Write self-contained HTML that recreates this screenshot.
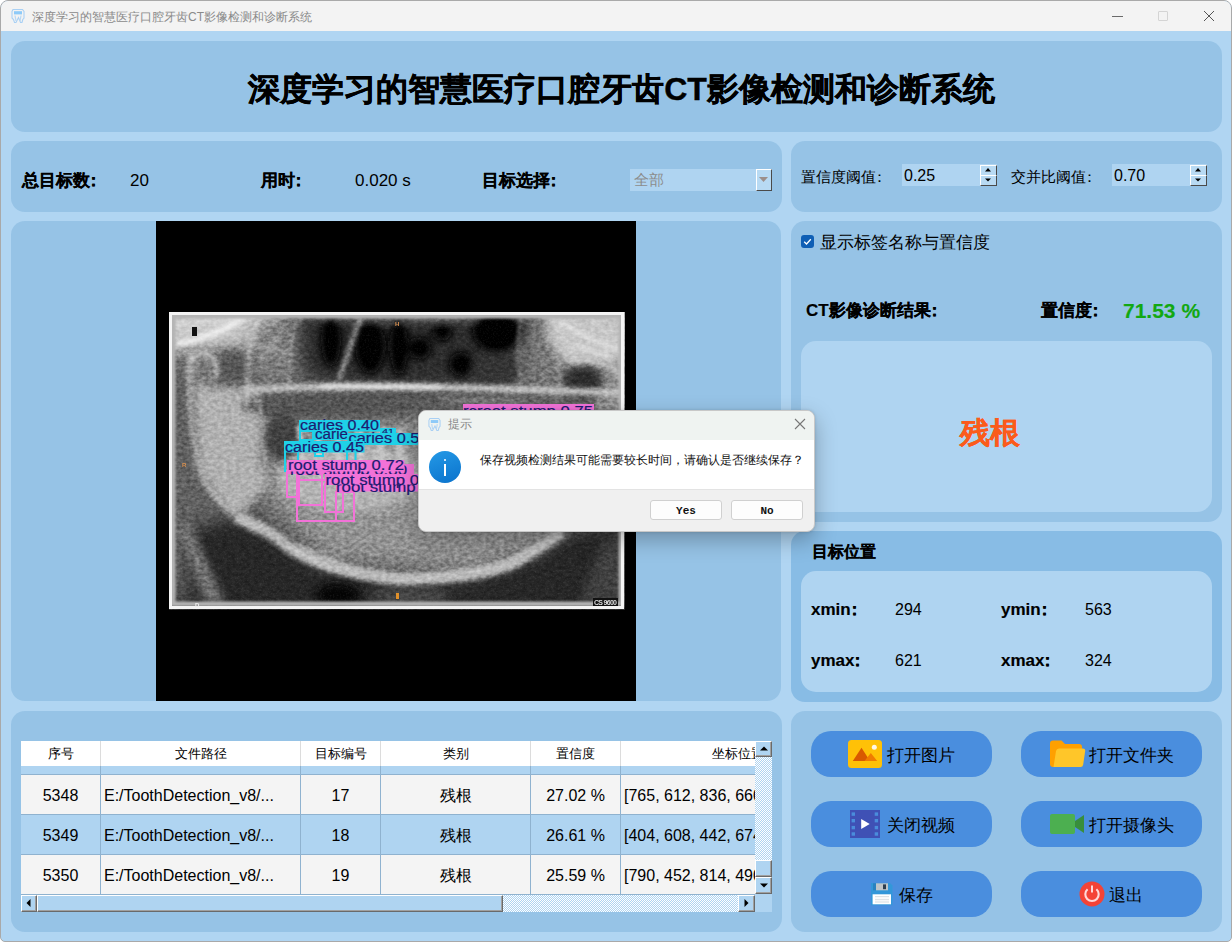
<!DOCTYPE html>
<html><head><meta charset="utf-8">
<style>
*{box-sizing:border-box;margin:0;padding:0}
html,body{width:1232px;height:942px;overflow:hidden;background:#fff}
body{font-family:"Liberation Sans",sans-serif;position:relative;color:#000}
.abs{position:absolute;white-space:nowrap}
#win{position:absolute;left:0;top:0;width:1232px;height:942px;background:#b0d5f2;border:1px solid #a9a9a9;border-radius:8px 8px 5px 5px;overflow:hidden}
#tb{position:absolute;left:0;top:0;width:1230px;height:30px;background:#f3f3f3}
.panel{position:absolute;background:#96c3e6;border-radius:14px}
.b{font-weight:bold;-webkit-text-stroke:0.15px currentColor}
.tt{-webkit-text-stroke:0.4px #000}
.c{margin-left:-0.3em}
.lbl{position:absolute;white-space:nowrap;line-height:1}
.spin{position:absolute;background:#afd4f1}
.sbtn{position:absolute;background:#b8daf3;border-right:1px solid #4a4a4a;border-bottom:1px solid #4a4a4a;border-top:1px solid #fff;border-left:1px solid #fff}
.btn{position:absolute;width:181px;height:46px;background:#4a8ede;border-radius:20px}
.btxt{position:absolute;font-size:17px;line-height:1;white-space:nowrap;margin-top:1px}

.th{position:absolute;top:6px;font-size:13px;line-height:1;text-align:center;white-space:nowrap;color:#000}
.td{position:absolute;font-size:16px;line-height:1;text-align:center;white-space:nowrap;color:#000}
.track{background:repeating-conic-gradient(#afd4f1 0 25%,#ffffff 0 50%) 0 0/2px 2px}
.sb3{position:absolute;background:#afd4f1;border-top:1px solid #fff;border-left:1px solid #fff;border-right:1px solid #6a6a6a;border-bottom:1px solid #6a6a6a;box-shadow:inset -1px -1px 0 #a0a0a0}
</style></head><body>
<div id="win">
<div id="tb">
  <svg class="abs" style="left:10px;top:7px" width="14" height="16" viewBox="0 0 14 16"><path d="M2 1.5H11.5L13 3.5V10L11.8 11.5L11 14.5H9.5L7.5 9.5L5 14.5H3.5L2.5 11.5L1 10V3.5Z" fill="none" stroke="#a9d0f4" stroke-width="1.1"/><rect x="3" y="3.2" width="8" height="3.2" fill="#8ecaf8"/><path d="M4 7.5L5 13M10 7.5L9 13" stroke="#b8d8f4" stroke-width="1.2"/></svg>
  <div class="lbl" style="left:31px;top:10px;font-size:12px;color:#8a8a8a">深度学习的智慧医疗口腔牙齿CT影像检测和诊断系统</div>
  <div class="abs" style="left:1111px;top:15px;width:11px;height:1px;background:#6a6a6a"></div>
  <div class="abs" style="left:1157px;top:10px;width:10px;height:10px;border:1px solid #d4d4d4;border-radius:1px"></div>
  <svg class="abs" style="left:1202px;top:9px" width="12" height="12" viewBox="0 0 12 12"><path d="M1 1L11 11M11 1L1 11" stroke="#555" stroke-width="1"/></svg>
</div>
</div>
<!-- panels -->
<div class="panel" style="left:11px;top:41px;width:1211px;height:91px"></div>
<div class="panel" style="left:11px;top:141px;width:771px;height:71px"></div>
<div class="panel" style="left:791px;top:141px;width:431px;height:71px"></div>
<div class="panel" style="left:11px;top:221px;width:770px;height:480px"></div>
<div class="panel" style="left:791px;top:221px;width:431px;height:301px"></div>
<div class="panel" style="left:791px;top:531px;width:431px;height:171px;background:#88bce5"></div>
<div class="panel" style="left:11px;top:711px;width:771px;height:221px"></div>
<div class="panel" style="left:791px;top:711px;width:431px;height:221px"></div>

<!-- title -->
<div class="lbl b tt" style="left:0;width:1232px;text-align:center;top:73px;font-size:32px;padding-left:11px">深度学习的智慧医疗口腔牙齿CT影像检测和诊断系统</div>

<!-- stats -->
<div class="lbl b" style="left:22px;top:172px;font-size:17px">总目标数<span class="c">：</span></div>
<div class="lbl" style="left:130px;top:172px;font-size:17px">20</div>
<div class="lbl b" style="left:261px;top:172px;font-size:17px">用时<span class="c">：</span></div>
<div class="lbl" style="left:355px;top:172px;font-size:17px">0.020 s</div>
<div class="lbl b" style="left:482px;top:172px;font-size:17px">目标选择<span class="c">：</span></div>
<div class="spin" style="left:630px;top:169px;width:142px;height:22px"></div>
<div class="lbl" style="left:634px;top:172px;font-size:15px;color:#8c8c8c">全部</div>
<div class="sbtn" style="left:756px;top:169px;width:16px;height:22px"></div>
<svg class="abs" style="left:759px;top:177px" width="10" height="6"><path d="M0 0H9L4.5 5Z" fill="#9c8f8a"/></svg>

<!-- thresholds -->
<div class="lbl" style="left:801px;top:169px;font-size:15px">置信度阈值<span class="c">：</span></div>
<div class="spin" style="left:902px;top:164px;width:95px;height:22px"></div>
<div class="lbl" style="left:904px;top:168px;font-size:16px">0.25</div>
<div class="sbtn" style="left:980px;top:165px;width:17px;height:11px"></div>
<div class="sbtn" style="left:980px;top:175px;width:17px;height:11px"></div>
<svg class="abs" style="left:985px;top:168px" width="7" height="4"><path d="M0 3.5H6L3 0Z" fill="#000"/></svg>
<svg class="abs" style="left:985px;top:178px" width="7" height="4"><path d="M0 0.5H6L3 3.5Z" fill="#000"/></svg>
<div class="lbl" style="left:1011px;top:169px;font-size:15px">交并比阈值<span class="c">：</span></div>
<div class="spin" style="left:1112px;top:164px;width:95px;height:22px"></div>
<div class="lbl" style="left:1114px;top:168px;font-size:16px">0.70</div>
<div class="sbtn" style="left:1190px;top:165px;width:17px;height:11px"></div>
<div class="sbtn" style="left:1190px;top:175px;width:17px;height:11px"></div>
<svg class="abs" style="left:1195px;top:168px" width="7" height="4"><path d="M0 3.5H6L3 0Z" fill="#000"/></svg>
<svg class="abs" style="left:1195px;top:178px" width="7" height="4"><path d="M0 0.5H6L3 3.5Z" fill="#000"/></svg>

<!-- image area -->
<div class="abs" style="left:156px;top:221px;width:480px;height:480px;background:#000"></div>
<!--XRAY--><svg class="abs" style="left:169px;top:312px" width="456" height="298" viewBox="169 312 456 298">
<defs>
<filter id="b1" x="-50%" y="-50%" width="200%" height="200%"><feGaussianBlur stdDeviation="1.2"/></filter><filter id="b2" x="-50%" y="-50%" width="200%" height="200%"><feGaussianBlur stdDeviation="2.2"/></filter>
<filter id="b4" x="-50%" y="-50%" width="200%" height="200%"><feGaussianBlur stdDeviation="4"/></filter>
<filter id="b10" x="-50%" y="-50%" width="200%" height="200%"><feGaussianBlur stdDeviation="9"/></filter>
<filter id="grain" x="0" y="0" width="100%" height="100%" color-interpolation-filters="sRGB"><feTurbulence type="fractalNoise" baseFrequency="0.6" numOctaves="2" seed="7"/><feColorMatrix values="0 0 0 0 1  0 0 0 0 1  0 0 0 0 1  1.6 0 0 0 -0.8"/></filter>
<filter id="tex" x="0" y="0" width="100%" height="100%" color-interpolation-filters="sRGB"><feTurbulence type="fractalNoise" baseFrequency="0.22 0.3" numOctaves="2" seed="11"/><feColorMatrix values="1.4 0 0 0 -0.2  1.4 0 0 0 -0.2  1.4 0 0 0 -0.2  0 0 0 0 1"/></filter><filter id="con" x="0" y="0" width="100%" height="100%" color-interpolation-filters="sRGB"><feComponentTransfer><feFuncR type="linear" slope="1.2" intercept="-0.09"/><feFuncG type="linear" slope="1.2" intercept="-0.09"/><feFuncB type="linear" slope="1.2" intercept="-0.09"/></feComponentTransfer></filter><clipPath id="xc"><rect x="169" y="312" width="456" height="298"/></clipPath>
</defs>
<g clip-path="url(#xc)">
<g filter="url(#con)">
<rect x="169" y="312" width="456" height="298" fill="#606060"/>
<g filter="url(#b10)">
 <path d="M150 295 L250 295 L300 300 L243 349 L181 352 L150 352Z" fill="#bcbcbc"/>
 <path d="M300 305 Q410 296 528 305 L528 350 Q522 384 470 386 Q400 390 330 384 Q298 378 296 350Z" fill="#383838"/>
 <path d="M540 300 L640 300 L640 365 L600 361 L565 362 L547 340Z" fill="#b0b0b0"/>
 <path d="M598 358 L640 358 L640 420 L598 420Z" fill="#8c8c8c"/>
 <ellipse cx="272" cy="352" rx="24" ry="36" fill="#7a7a7a"/>
 <ellipse cx="545" cy="355" rx="24" ry="40" fill="#767676"/>
 <path d="M169 350 L195 350 L200 474 L220 520 L169 522Z" fill="#646464"/>
 <path d="M262 420 L580 420 L570 540 L470 570 L330 560 L265 500Z" fill="#8c8c8c"/>
 <path d="M189 527 L236 517 L268 531 L292 549 L321 565 L400 583 L473 576 L510 564 L535 549 L562 532 L640 530 L640 640 L150 640 L150 603 L189 603Z" fill="#303030"/>
</g>
<g filter="url(#b4)">
 <ellipse cx="232" cy="366" rx="17" ry="16" fill="#5a5a5a"/>
 
 <ellipse cx="415" cy="313" rx="125" ry="7" fill="#7a7a7a"/>
 <ellipse cx="370" cy="346" rx="15" ry="28" fill="#080808"/>
 <ellipse cx="399" cy="346" rx="9" ry="30" fill="#080808"/>
 <ellipse cx="331" cy="340" rx="10" ry="27" fill="#0a0a0a"/>
 <circle cx="420" cy="348" r="11" fill="#101010"/>
 <circle cx="442" cy="331" r="10" fill="#0a0a0a"/>
 <circle cx="461" cy="364" r="12" fill="#0c0c0c"/>
 <ellipse cx="497" cy="330" rx="25" ry="22" fill="#080808"/>
 <ellipse cx="496" cy="370" rx="24" ry="16" fill="#3c3c3c"/>
 
 <path d="M547 312 L625 312 L619 361 L565 362 L547 340Z" fill="#b8b8b8"/>
 <ellipse cx="583" cy="381" rx="19" ry="17" fill="#383838"/>
 <path d="M192 385 L255 388 L261 418 L261 461 L268 486 L240 517 L228 512 L200 474Z" fill="#a6a6a6"/>
 <ellipse cx="282" cy="438" rx="20" ry="24" fill="#4a4a4a"/>
 <ellipse cx="330" cy="406" rx="90" ry="11" fill="#585858"/><ellipse cx="520" cy="408" rx="80" ry="10" fill="#666"/>
 <ellipse cx="350" cy="478" rx="72" ry="34" fill="#a8a8a8"/>
 <path d="M175 524 L190 524 L225 603 L205 603Z" fill="#727272"/>
 <ellipse cx="338" cy="595" rx="22" ry="12" fill="#121212"/>
 <ellipse cx="410" cy="596" rx="40" ry="10" fill="#4c4c4c"/>
 <path d="M606 533 L625 533 L625 603 L580 601Z" fill="#474747"/>
 <ellipse cx="202" cy="368" rx="15" ry="16" fill="#8c8c8c"/>
 <ellipse cx="204" cy="370" rx="8" ry="9" fill="#6e6e6e"/>
</g>
<g filter="url(#b2)" fill="none">
 <path d="M176 344 Q215 338 245 316" stroke="#dadada" stroke-width="6"/>
 <path d="M172 326 Q215 322 255 314" stroke="#c8c8c8" stroke-width="3"/>
 <path d="M262 314 Q245 340 248 392" stroke="#c4c4c4" stroke-width="2.5"/>
 <path d="M300 316 Q286 340 290 384" stroke="#a8a8a8" stroke-width="2"/>
 <path d="M362 312 L339 380" stroke="#9a9a9a" stroke-width="4"/>
 <path d="M521 318 Q516 350 522 392" stroke="#989898" stroke-width="2"/>
 <path d="M545 316 Q560 350 560 395" stroke="#a8a8a8" stroke-width="2"/>
 <path d="M560 322 Q590 340 620 350" stroke="#d8d8d8" stroke-width="3"/>
 <path d="M575 345 Q595 352 612 358" stroke="#cfcfcf" stroke-width="3"/>
 <path d="M570 362 Q600 356 622 376" stroke="#c8c8c8" stroke-width="2.5"/>
 <path d="M189 380 Q186 356 202 353 Q218 354 217 378" stroke="#c8c8c8" stroke-width="2.5"/>
 <path d="M243 390 Q300 386 400 387 Q500 388 622 393" stroke="#b4b4b4" stroke-width="7"/><path d="M320 386 Q380 385 440 387" stroke="#d8d8d8" stroke-width="5"/>
 <path d="M236 517 Q270 530 292 549 Q330 572 400 579 Q470 578 510 564 Q540 548 562 532" stroke="#b0b0b0" stroke-width="12"/>
 <path d="M212 474 Q216 500 236 517" stroke="#9a9a9a" stroke-width="4"/>
 <path d="M190 352 Q186 420 200 470 Q210 500 232 510" stroke="#b8b8b8" stroke-width="3"/>
 <path d="M258 392 Q262 440 268 486" stroke="#a0a0a0" stroke-width="2"/>
 <path d="M230 330 Q260 350 290 352" stroke="#b0b0b0" stroke-width="2"/>
 <path d="M262 360 Q275 340 285 330" stroke="#a8a8a8" stroke-width="2"/>
 <path d="M548 314 Q565 330 575 360" stroke="#c8c8c8" stroke-width="2"/>
 <path d="M590 315 Q605 335 620 340" stroke="#c0c0c0" stroke-width="2.5"/>
 <path d="M600 400 Q596 420 604 440" stroke="#b0b0b0" stroke-width="2"/>
 <path d="M440 398 Q470 402 520 400" stroke="#9a9a9a" stroke-width="2"/>
 <path d="M245 460 Q255 430 270 420" stroke="#9a9a9a" stroke-width="2"/>
 <path d="M300 425 L302 465M318 428 L320 470M338 430 L339 472M360 428 L361 470M380 430 L381 468M400 428 L401 466" stroke="#c0c0c0" stroke-width="5"/>
 <path d="M250 530 Q300 545 340 560" stroke="#9a9a9a" stroke-width="3"/>
 <path d="M420 545 Q470 550 520 540" stroke="#8a8a8a" stroke-width="3"/>
</g>
</g>
<rect x="169" y="312" width="456" height="298" filter="url(#tex)" style="mix-blend-mode:overlay" opacity="0.3"/><rect x="169" y="312" width="456" height="298" filter="url(#grain)" opacity="0.12"/>
<g filter="url(#b1)"><rect x="173" y="316" width="448" height="288" fill="none" stroke="#b4b4b4" stroke-width="5"/></g>
<rect x="170.5" y="313.5" width="452" height="294" fill="none" stroke="#f4f4f4" stroke-width="3"/>
<rect x="192" y="327" width="5" height="9" fill="#111"/><text x="395" y="326" font-size="6" font-weight="bold" fill="#d89050" font-family="Liberation Sans">H</text><text x="182" y="467" font-size="6" font-weight="bold" fill="#d89050" font-family="Liberation Sans">R</text><text x="195" y="607" font-size="6" font-weight="bold" fill="#eee" font-family="Liberation Sans">D</text><rect x="396" y="593" width="3" height="6" fill="#e0902a"/>
<rect x="593" y="598" width="25" height="8" fill="#111"/>
<text x="594" y="605" font-size="7" font-weight="bold" fill="#ddd" font-family="Liberation Sans" textLength="23">CS 9600</text>
</g>
</svg>
<!--/XRAY--><!--ANNOT--><div class="abs" style="left:156px;top:221px;width:480px;height:480px;overflow:hidden">
<svg class="abs" style="left:0;top:0" width="480" height="480" viewBox="156 221 480 480">
 <g fill="none" stroke-width="2">
  <path d="M285 452V472M298 452V460M347 445V460M355.5 445V460" stroke="#1fd1e8"/>
  <rect x="315" y="452" width="8" height="4" stroke="#1fd1e8"/>
  <rect x="300" y="431" width="13" height="9" stroke="#1fd1e8"/>
  <rect x="287" y="472" width="10" height="25" stroke="#f272d8"/>
  <rect x="299" y="474" width="23" height="31" stroke="#f272d8"/>
  <rect x="297" y="480" width="57" height="41" stroke="#f272d8"/>
  <rect x="325" y="484" width="18" height="28" stroke="#f272d8"/>
  <rect x="336" y="492" width="18" height="29" stroke="#f272d8"/>
 </g>
 <g font-family="Liberation Sans" font-size="14" fill="#1d1b70" stroke="#1d1b70" stroke-width="0.2">
  <rect x="299" y="420" width="81" height="11.5" fill="#1fd1e8" stroke="none"/>
  <rect x="380" y="428" width="16" height="5" fill="#1fd1e8" stroke="none"/>
  <text x="300" y="430" textLength="79" lengthAdjust="spacingAndGlyphs">caries 0.40</text>
  <text x="382" y="434" font-size="8" textLength="12" lengthAdjust="spacingAndGlyphs">41</text>
  <rect x="313" y="431" width="35" height="9" fill="#1fd1e8" stroke="none"/>
  <text x="315" y="438.7" textLength="33" lengthAdjust="spacingAndGlyphs">carie</text>
  <rect x="347.5" y="433" width="80" height="12" fill="#1fd1e8" stroke="none"/>
  <text x="348.5" y="443" textLength="80" lengthAdjust="spacingAndGlyphs">caries 0.51</text>
  <rect x="284" y="441" width="80.5" height="11.5" fill="#1fd1e8" stroke="none"/>
  <text x="285" y="451.5" textLength="79" lengthAdjust="spacingAndGlyphs">caries 0.45</text>
  <rect x="287" y="464" width="127" height="10" fill="#f272d8" stroke="none"/>
  <text x="290" y="474.5" textLength="117" lengthAdjust="spacingAndGlyphs">root stump 0.80</text>
  <rect x="287" y="460" width="117.5" height="11.5" fill="#f272d8" stroke="none"/>
  <text x="288" y="470" textLength="116" lengthAdjust="spacingAndGlyphs">root stump 0.72</text>
  <rect x="336" y="483.5" width="90" height="8" fill="#f272d8" stroke="none"/>
  <text x="336" y="491.5" textLength="117" lengthAdjust="spacingAndGlyphs">root stump 0.65</text>
  <rect x="325" y="474" width="100" height="10.5" fill="#f272d8" stroke="none"/>
  <text x="325.5" y="484.5" textLength="117" lengthAdjust="spacingAndGlyphs">root stump 0.70</text>
  <rect x="463" y="404" width="131" height="12" fill="#f272d8" stroke="none"/>
  <text x="463" y="416" textLength="130" lengthAdjust="spacingAndGlyphs">rcroot stump 0.75</text>
 </g>
</svg>
</div>
<!--/ANNOT-->

<!-- right info -->
<div class="abs" style="left:801px;top:235px;width:13px;height:13px;background:#0f5fb5;border-radius:3px"></div>
<svg class="abs" style="left:801px;top:235px" width="13" height="13"><path d="M3.2 6.8L5.5 9L9.8 4.3" fill="none" stroke="#fff" stroke-width="1.3"/></svg>
<div class="lbl" style="left:820px;top:234px;font-size:17px">显示标签名称与置信度</div>
<div class="lbl b" style="left:806px;top:302px;font-size:17px">CT影像诊断结果<span class="c">：</span></div>
<div class="lbl b" style="left:1041px;top:302px;font-size:17px">置信度<span class="c">：</span></div>
<div class="lbl b" style="left:1123px;top:300px;font-size:21px;color:#12a812">71.53 %</div>
<div class="abs" style="left:801px;top:341px;width:411px;height:171px;background:#afd4f1;border-radius:15px"></div>
<div class="lbl b" style="left:960px;top:418px;font-size:30px;color:#fb5b1b">残根</div>

<!-- position -->
<div class="lbl b" style="left:812px;top:544px;font-size:16px">目标位置</div>
<div class="abs" style="left:801px;top:571px;width:411px;height:121px;background:#afd4f1;border-radius:15px"></div>
<div class="lbl b" style="left:811px;top:601px;font-size:17px">xmin<span class="c">：</span></div>
<div class="lbl" style="left:895px;top:602px;font-size:16px">294</div>
<div class="lbl b" style="left:1001px;top:601px;font-size:17px">ymin<span class="c">：</span></div>
<div class="lbl" style="left:1085px;top:602px;font-size:16px">563</div>
<div class="lbl b" style="left:811px;top:652px;font-size:17px">ymax<span class="c">：</span></div>
<div class="lbl" style="left:895px;top:653px;font-size:16px">621</div>
<div class="lbl b" style="left:1001px;top:652px;font-size:17px">xmax<span class="c">：</span></div>
<div class="lbl" style="left:1085px;top:653px;font-size:16px">324</div>

<!-- buttons -->
<div class="btn" style="left:811px;top:731px"></div>
<div class="btn" style="left:1021px;top:731px"></div>
<div class="btn" style="left:811px;top:801px"></div>
<div class="btn" style="left:1021px;top:801px"></div>
<div class="btn" style="left:811px;top:871px"></div>
<div class="btn" style="left:1021px;top:871px"></div>
<div class="btxt" style="left:887px;top:746px">打开图片</div>
<div class="btxt" style="left:1089px;top:746px">打开文件夹</div>
<div class="btxt" style="left:887px;top:816px">关闭视频</div>
<div class="btxt" style="left:1089px;top:816px">打开摄像头</div>
<div class="btxt" style="left:899px;top:886px">保存</div>
<div class="btxt" style="left:1109px;top:886px">退出</div>

<svg class="abs" style="left:848px;top:740px" width="34" height="28" viewBox="0 0 34 28"><rect x="0" y="0" width="34" height="28" rx="3.5" fill="#ffc107"/><path d="M4.8 21L13.5 7.7L21 19.5L19.6 21Z" fill="#d95a00"/><path d="M16.5 21L22.8 13L29.2 21Z" fill="#f07c00"/><circle cx="26.3" cy="7.3" r="2.5" fill="#fff8e6"/></svg>
<svg class="abs" style="left:1050px;top:740px" width="36" height="28" viewBox="0 0 36 28"><path d="M0 3.5Q0 0.5 3 0.5H11.5L15 4H29Q32 4 32 7V24Q32 27 29 27H3Q0 27 0 24Z" fill="#ffa000"/><path d="M3.5 27L6 11Q6.5 8.5 9 8.5H33Q35.5 8.5 35.2 11L33.2 24.5Q32.8 27 30.5 27Z" fill="#ffc629"/></svg>
<svg class="abs" style="left:850px;top:810px" width="30" height="28" viewBox="0 0 30 28"><rect x="0" y="0" width="30" height="28" fill="#3f51b5"/><g fill="#4a8ddc"><rect x="1.6" y="2.4" width="3.4" height="3.4"/><rect x="1.6" y="9" width="3.4" height="3.4"/><rect x="1.6" y="15.9" width="3.4" height="3.4"/><rect x="1.6" y="22.3" width="3.4" height="3.4"/><rect x="24.7" y="2.4" width="3.4" height="3.4"/><rect x="24.7" y="9" width="3.4" height="3.4"/><rect x="24.7" y="15.9" width="3.4" height="3.4"/><rect x="24.7" y="22.3" width="3.4" height="3.4"/></g><path d="M11.2 9V19.1L19.7 14Z" fill="#fff"/></svg>
<svg class="abs" style="left:1050px;top:814px" width="35" height="20" viewBox="0 0 35 20"><rect x="0" y="0" width="25" height="20" rx="2" fill="#4caf50"/><path d="M25 7L34 1V19L25 13Z" fill="#388e3c"/></svg>
<svg class="abs" style="left:871px;top:882.5px" width="22" height="23" viewBox="0 0 22 23"><path d="M0 0H19L21.5 2.5V22.3H0Z" fill="#3397d9"/><rect x="2" y="0.3" width="3" height="7" fill="#2a82bf"/><rect x="5" y="0.3" width="12" height="7" fill="#bec5c9"/><rect x="12" y="1.4" width="3" height="4.8" fill="#2c3e50"/><rect x="1.6" y="11.3" width="18.4" height="10" fill="#fff"/><rect x="4" y="13.2" width="14" height="1" fill="#d5dbdf"/><rect x="4" y="15.8" width="14" height="1.5" fill="#e0e4e7"/><rect x="4" y="18.5" width="14" height="1" fill="#d5dbdf"/></svg>
<svg class="abs" style="left:1079px;top:881px" width="26" height="26" viewBox="0 0 26 26"><circle cx="13" cy="13" r="12.5" fill="#f44336"/><path d="M8.6 8.3A6.7 6.7 0 1 0 17.4 8.3" fill="none" stroke="#ffd9d9" stroke-width="2.1" stroke-linecap="butt"/><path d="M13 4.5V11.5" stroke="#ffd9d9" stroke-width="2" stroke-linecap="butt"/></svg>



<div class="abs" style="left:21px;top:741px;width:751px;height:171px;overflow:hidden;background:#afd4f1">
 <div class="abs" style="left:0;top:0;width:735px;height:25px;background:#fff"></div>
 <div class="abs" style="left:0;top:25px;width:735px;height:8px;background:#afd4f1"></div>
 <div class="abs" style="left:0;top:33px;width:735px;height:1px;background:#8fb2cf"></div>
 <div class="abs" style="left:0;top:34px;width:735px;height:40px;background:#f4f4f4"></div>
 <div class="abs" style="left:0;top:73px;width:735px;height:1px;background:#8fb2cf"></div>
 <div class="abs" style="left:0;top:74px;width:735px;height:40px;background:#afd4f1"></div>
 <div class="abs" style="left:0;top:113px;width:735px;height:1px;background:#8fb2cf"></div>
 <div class="abs" style="left:0;top:114px;width:735px;height:39px;background:#f4f4f4"></div>
 <!-- header dividers -->
 <div class="abs" style="left:79px;top:0;width:1px;height:25px;background:#dcdcdc"></div>
 <div class="abs" style="left:279px;top:0;width:1px;height:25px;background:#dcdcdc"></div>
 <div class="abs" style="left:359px;top:0;width:1px;height:25px;background:#dcdcdc"></div>
 <div class="abs" style="left:509px;top:0;width:1px;height:25px;background:#dcdcdc"></div>
 <div class="abs" style="left:599px;top:0;width:1px;height:25px;background:#dcdcdc"></div>
 <!-- body dividers -->
 <div class="abs" style="left:79px;top:25px;width:1px;height:128px;background:#8fb2cf"></div>
 <div class="abs" style="left:279px;top:25px;width:1px;height:128px;background:#8fb2cf"></div>
 <div class="abs" style="left:359px;top:25px;width:1px;height:128px;background:#8fb2cf"></div>
 <div class="abs" style="left:509px;top:25px;width:1px;height:128px;background:#8fb2cf"></div>
 <div class="abs" style="left:599px;top:25px;width:1px;height:128px;background:#8fb2cf"></div>
 <!-- header text -->
 <div class="th" style="left:0;width:79px">序号</div>
 <div class="th" style="left:80px;width:199px;top:6px">文件路径</div>
 <div class="th" style="left:280px;width:79px">目标编号</div>
 <div class="th" style="left:360px;width:149px">类别</div>
 <div class="th" style="left:510px;width:89px">置信度</div>
 <div class="th" style="left:600px;width:234px">坐标位置</div>
 <!-- rows -->
 <div class="td" style="left:0;width:79px;top:47px">5348</div>
 <div class="td" style="left:83px;top:47px;text-align:left">E:/ToothDetection_v8/...</div>
 <div class="td" style="left:280px;width:79px;top:47px">17</div>
 <div class="td" style="left:360px;width:149px;top:47px">残根</div>
 <div class="td" style="left:510px;width:89px;top:47px">27.02 %</div>
 <div class="td" style="left:603px;width:132px;top:47px;text-align:left;overflow:hidden">[765, 612, 836, 660]</div>
 <div class="td" style="left:0;width:79px;top:87px">5349</div>
 <div class="td" style="left:83px;top:87px;text-align:left">E:/ToothDetection_v8/...</div>
 <div class="td" style="left:280px;width:79px;top:87px">18</div>
 <div class="td" style="left:360px;width:149px;top:87px">残根</div>
 <div class="td" style="left:510px;width:89px;top:87px">26.61 %</div>
 <div class="td" style="left:603px;width:132px;top:87px;text-align:left;overflow:hidden">[404, 608, 442, 674]</div>
 <div class="td" style="left:0;width:79px;top:127px">5350</div>
 <div class="td" style="left:83px;top:127px;text-align:left">E:/ToothDetection_v8/...</div>
 <div class="td" style="left:280px;width:79px;top:127px">19</div>
 <div class="td" style="left:360px;width:149px;top:127px">残根</div>
 <div class="td" style="left:510px;width:89px;top:127px">25.59 %</div>
 <div class="td" style="left:603px;width:132px;top:127px;text-align:left;overflow:hidden">[790, 452, 814, 490]</div>
 <!-- vertical scrollbar -->
 <div class="abs" style="left:0;top:153px;width:734px;height:1px;background:#8fb2cf"></div>
 <div class="abs track" style="left:734px;top:0;width:17px;height:153px"></div>
 <div class="sb3" style="left:734px;top:0;width:17px;height:16px"></div>
 <svg class="abs" style="left:739px;top:5px" width="8" height="5"><path d="M0 4.5H8L4 0.5Z" fill="#000"/></svg>
 <div class="sb3" style="left:734px;top:119px;width:17px;height:17px"></div>
 <div class="sb3" style="left:734px;top:136px;width:17px;height:17px"></div>
 <svg class="abs" style="left:739px;top:142px" width="8" height="5"><path d="M0 0.5H8L4 4.5Z" fill="#000"/></svg>
 <!-- horizontal scrollbar -->
 <div class="abs track" style="left:0;top:154px;width:734px;height:17px"></div>
 <div class="sb3" style="left:0;top:154px;width:16px;height:17px"></div>
 <svg class="abs" style="left:5px;top:158px" width="5" height="8"><path d="M4.5 0V8L0.5 4Z" fill="#000"/></svg>
 <div class="sb3" style="left:16px;top:154px;width:466px;height:17px"></div>
 <div class="sb3" style="left:717px;top:154px;width:17px;height:17px"></div>
 <svg class="abs" style="left:723px;top:158px" width="5" height="8"><path d="M0.5 0V8L4.5 4Z" fill="#000"/></svg>
 <div class="abs" style="left:734px;top:154px;width:17px;height:17px;background:#afd4f1"></div>
</div>
</div>



<div class="abs" style="left:418px;top:410px;width:397px;height:122px;border-radius:8px;overflow:hidden;box-shadow:0 8px 22px rgba(0,0,0,.28),0 0 3px rgba(0,0,0,.15);border:1px solid #c8c8c8;background:#f0f0f0">
 <div class="abs" style="left:0;top:0;width:397px;height:28.5px;background:#eff3f1"></div>
 <svg class="abs" style="left:8.5px;top:5.5px" width="13" height="15" viewBox="0 0 14 16"><path d="M2 1.5H11.5L13 3.5V10L11.8 11.5L11 14.5H9.5L7.5 9.5L5 14.5H3.5L2.5 11.5L1 10V3.5Z" fill="none" stroke="#a9d0f4" stroke-width="1.1"/><rect x="3" y="3.2" width="8" height="3.2" fill="#8ecaf8"/><path d="M4 7.5L5 13M10 7.5L9 13" stroke="#b8d8f4" stroke-width="1.2"/></svg>
 <div class="lbl" style="left:29px;top:7px;font-size:12px;color:#8a8a8a">提示</div>
 <svg class="abs" style="left:375px;top:7px" width="12" height="12" viewBox="0 0 12 12"><path d="M1 1L11 11M11 1L1 11" stroke="#777" stroke-width="1.1"/></svg>
 <div class="abs" style="left:0;top:28.5px;width:397px;height:50px;background:#fff;border-bottom:1px solid #e3e3e3"></div>
 <div class="abs" style="left:10px;top:40px;width:32px;height:32px;border-radius:50%;background:linear-gradient(160deg,#2499e6,#0a72cc)"></div>
 <div class="abs" style="left:24.6px;top:47.6px;width:2.8px;height:2.8px;background:#fff;border-radius:50%"></div>
 <div class="abs" style="left:25px;top:53px;width:2px;height:11.7px;background:#fff"></div>
 <div class="lbl" style="left:61px;top:43px;font-size:12px;color:#111">保存视频检测结果可能需要较长时间，请确认是否继续保存？</div>
 <div class="abs" style="left:231px;top:89px;width:72px;height:20px;background:#fdfdfd;border:1px solid #d0d0d0;border-radius:3px"></div>
 <div class="abs" style="left:312px;top:89px;width:72px;height:20px;background:#fdfdfd;border:1px solid #d0d0d0;border-radius:3px"></div>
 <div class="lbl" style="left:231px;width:72px;text-align:center;top:95px;font-size:11px;font-weight:bold;font-family:'Liberation Mono',monospace;color:#111">Yes</div>
 <div class="lbl" style="left:312px;width:72px;text-align:center;top:95px;font-size:11px;font-weight:bold;font-family:'Liberation Mono',monospace;color:#111">No</div>
</div>

</body></html>
